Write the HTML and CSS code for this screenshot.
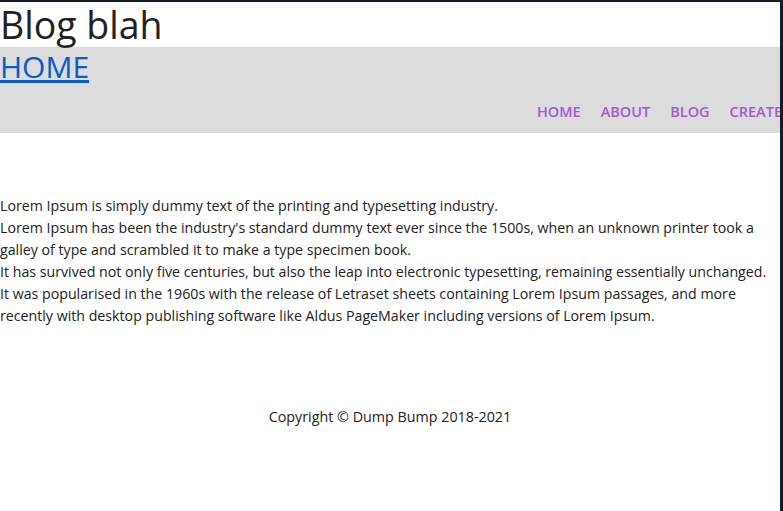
FILE: index.html
```html
<!DOCTYPE html>
<html lang="en">
<head>
<meta charset="utf-8">
<title>Blog blah</title>
<link rel="stylesheet" href="styles.css">
</head>
<body>
<div class="page">
  <h1 class="site-title">Blog blah</h1>
  <header class="masthead">
    <a class="home-link" href="#">HOME</a>
    <nav class="nav">
      <a href="#">HOME</a>
      <a href="#">ABOUT</a>
      <a href="#">BLOG</a>
      <a href="#">CREATE</a>
    </nav>
  </header>
  <main class="content">
    <p class="intro">Lorem Ipsum is simply dummy text of the printing and typesetting industry.<br>Lorem Ipsum has been the industry's standard dummy text ever since the 1500s, when an unknown printer took a<br>galley of type and scrambled it to make a type specimen book.<br>It has survived not only five centuries, but also the leap into electronic typesetting, remaining essentially unchanged.<br>It was popularised in the 1960s with the release of Letraset sheets containing Lorem Ipsum passages, and more<br>recently with desktop publishing software like Aldus PageMaker including versions of Lorem Ipsum.</p>
  </main>
  <footer class="footer">Copyright © Dump Bump 2018-2021</footer>
</div>
</body>
</html>
```
FILE: styles.css
```css
html {
  background: #161b2b;
  height: 100%;
}
body {
  margin: 0;
  padding: 2px 3px 0 0;
  height: 100%;
  box-sizing: border-box;
  font-family: "Open Sans", "Noto Sans", sans-serif;
  color: #222;
}
.page {
  background: #fff;
  height: 100%;
  overflow: hidden;
}
.site-title {
  margin: 0;
  font-size: 37.5px;
  line-height: 45px;
  font-weight: 500;
  color: #222;
}
.masthead {
  background: #dcdcdc;
  display: flex;
  flex-direction: column;
  height: 86px;
}
.home-link {
  align-self: flex-start;
  font-size: 30px;
  line-height: 40px;
  color: #0a5bc4;
}
.nav {
  display: flex;
  justify-content: flex-end;
  gap: 20px;
  margin-top: 14px;
  margin-right: -2px;
  white-space: nowrap;
}
.nav a {
  color: #a259cc;
  text-decoration: none;
  font-size: 14.5px;
  font-weight: 600;
  line-height: 22px;
}
.content {
  padding-top: 62px;
}
.intro {
  margin: 0;
  font-size: 14.2px;
  line-height: 22px;
}
.footer {
  margin-top: 79px;
  text-align: center;
  font-size: 14.3px;
  line-height: 22px;
}
```
